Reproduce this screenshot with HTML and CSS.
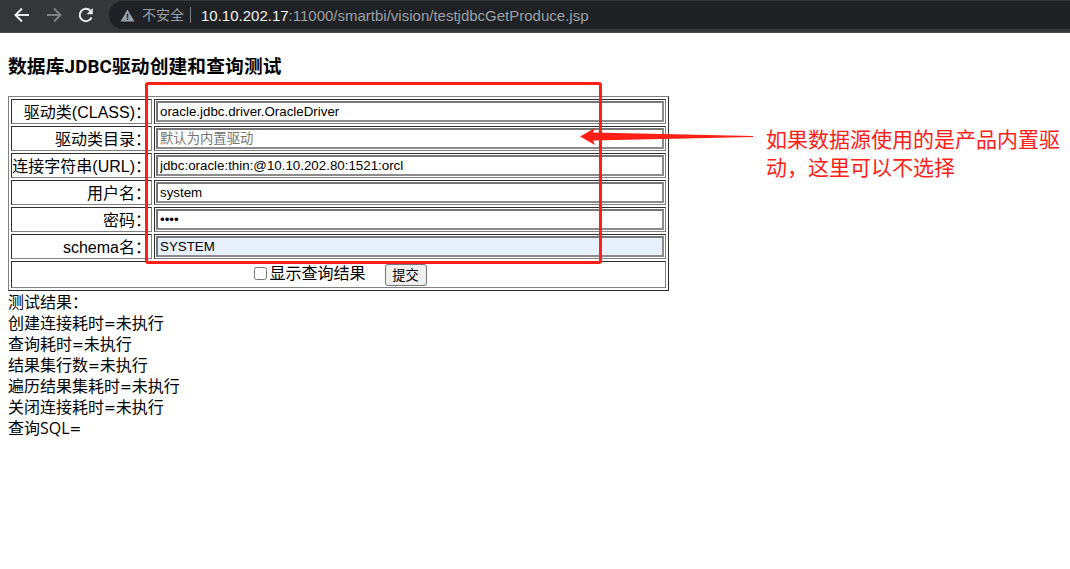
FILE: index.html
```html
<!DOCTYPE html>
<html lang="zh">
<head>
<meta charset="utf-8">
<title>testjdbcGetProduce</title>
<link rel="stylesheet" href="styles.css">
</head>
<body>
<header class="toolbar">
  <svg class="nav" viewBox="0 0 18 18"><path d="M16 9H3M9 2.5 2.5 9 9 15.5" fill="none" stroke="#e8eaed" stroke-width="2"/></svg>
  <svg class="nav" viewBox="0 0 18 18"><path d="M2 9h13M9 2.5 15.500 9 9 15.500" fill="none" stroke="#7f8184" stroke-width="2"/></svg>
  <svg class="nav" viewBox="0 0 18 18"><path d="M14.600 11.500A6.200 6.200 0 1 1 13.500 4.800" fill="none" stroke="#e8eaed" stroke-width="2"/><path d="M15.800 2v6.200H9.600z" fill="#e8eaed"/></svg>
  <div class="omnibox">
    <svg class="warn" viewBox="0 0 16 14"><path d="M8 .5 15.500 13.500H.5z" fill="#9aa0a6"/><path d="M7.200 5h1.600v4.500H7.200zM7.200 10.300h1.600v1.500H7.200z" fill="#2a2c30"/></svg>
    <span class="insecure">不安全</span>
    <span class="divider"></span>
    <span class="url"><b class="host">10.10.202.17</b>:11000/smartbi/vision/testjdbcGetProduce.jsp</span>
  </div>
</header>
<main class="page">
  <h3 class="title">数据库JDBC驱动创建和查询测试</h3>
  <table class="form" border="1">
    <tr><td class="label">驱动类(CLASS)：</td><td class="field"><input class="text" type="text" value="oracle.jdbc.driver.OracleDriver"></td></tr>
    <tr><td class="label">驱动类目录：</td><td class="field"><input class="text" type="text" placeholder="默认为内置驱动"></td></tr>
    <tr><td class="label">连接字符串(URL)：</td><td class="field"><input class="text" type="text" value="jdbc:oracle:thin:@10.10.202.80:1521:orcl"></td></tr>
    <tr><td class="label">用户名：</td><td class="field"><input class="text" type="text" value="system"></td></tr>
    <tr><td class="label">密码：</td><td class="field"><input class="text" type="password" value="demo"></td></tr>
    <tr><td class="label">schema名：</td><td class="field"><input class="text filled" type="text" value="SYSTEM"></td></tr>
    <tr><td class="actions" colspan="2"><label class="check"><input class="box" type="checkbox">显示查询结果</label><button class="submit" type="button">提交</button></td></tr>
  </table>
  <div class="results">
    <div>测试结果：</div>
    <div>创建连接耗时<span class="eq">=</span>未执行</div>
    <div>查询耗时<span class="eq">=</span>未执行</div>
    <div>结果集行数<span class="eq">=</span>未执行</div>
    <div>遍历结果集耗时<span class="eq">=</span>未执行</div>
    <div>关闭连接耗时<span class="eq">=</span>未执行</div>
    <div>查询SQL<span class="eq">=</span></div>
  </div>
</main>
<div class="mark-box"></div>
<svg class="mark-arrow" viewBox="0 0 173 17"><path d="M0 8.500 15 0 13 4.500 173 8V9L13 12.500 15 17z" fill="#fe2016"/></svg>
<p class="mark-note">如果数据源使用的是产品内置驱动，这里可以不选择</p>
</body>
</html>
```
FILE: styles.css
```css
html, body { margin: 0; padding: 0; background: #fff; }
body {
  position: relative;
  height: 569px;
  overflow: hidden;
  font: 16px/21px "Liberation Sans", "Noto Sans CJK SC", sans-serif;
  color: #000;
}
.toolbar {
  display: flex;
  align-items: center;
  gap: 14px;
  height: 30px;
  padding: 0 0 2px 13px;
  background: #35363a;
  border-bottom: 1px solid #4a4b4f;
}
.nav { width: 18px; height: 18px; flex: none; }
.omnibox {
  display: flex;
  align-items: center;
  flex: 1;
  height: 28px;
  padding-left: 11px;
  background: #202124;
  border-radius: 14px 0 0 14px;
  color: #9aa0a6;
}
.warn { width: 15px; height: 13px; margin-right: 7px; }
.insecure { font-size: 14px; }
.divider { width: 1px; height: 16px; background: #7b7e82; margin: 0 10px 0 6px; }
.url { font-size: 15px; white-space: nowrap; }
.host { font-weight: 400; color: #f1f3f4; }
.page { padding: 0 8px; }
.title {
  margin: 0 0 17px;
  padding-top: 22px;
  font-family: Roboto, "Noto Sans CJK SC", sans-serif;
  font-size: 18.72px;
  line-height: 24px;
  font-weight: 700;
  letter-spacing: .15px;
}
.form {
  width: 661px;
  box-sizing: border-box;
  table-layout: fixed;
  border: 1px solid;
  border-color: #808080 #2e2e2e #2e2e2e #808080;
}
.form td {
  border: 1px solid;
  border-color: #2e2e2e #808080 #808080 #2e2e2e;
}
.form .label { width: 139px; padding: 2px 0 0; text-align: right; white-space: nowrap; height: 21px; }
.form .field { padding: 1px; }
.text {
  display: block;
  box-sizing: border-box;
  width: 100%;
  height: 21px;
  padding: 1px 2px;
  font: 13.333px "Liberation Sans", "Noto Sans CJK SC", sans-serif;
  border: 2px solid;
  border-color: #767676 #8c8c8c #8c8c8c #767676;
}
.text::placeholder { color: #757575; }
.filled { background: #e8f0fe; }
.form .actions { padding: 0 0 0 3px; text-align: center; height: 25px; }
.check { display: inline-flex; align-items: center; }
.box { width: 13px; height: 13px; margin: 0 2px 0 1px; }
.submit {
  width: 42px;
  height: 22px;
  margin-left: 19px;
  padding: 0;
  font: 13.333px "Liberation Sans", "Noto Sans CJK SC", sans-serif;
  background: #efefef;
  border: 1px solid #767676;
  border-radius: 3px;
}
.results { padding-top: 1px; font-family: "Open Sans", "Noto Sans CJK SC", sans-serif; }
.eq { font: 14px/16px "DejaVu Sans", sans-serif; }
.mark-box {
  position: absolute;
  left: 145px;
  top: 82px;
  width: 457px;
  height: 182px;
  box-sizing: border-box;
  border: 3px solid #fe2016;
  border-radius: 3px;
}
.mark-arrow { position: absolute; left: 580px; top: 128px; width: 173px; height: 17px; }
.mark-note {
  position: absolute;
  left: 766px;
  top: 126px;
  width: 300px;
  margin: 0;
  font-size: 21px;
  line-height: 28px;
  color: #fe2016;
}
```
